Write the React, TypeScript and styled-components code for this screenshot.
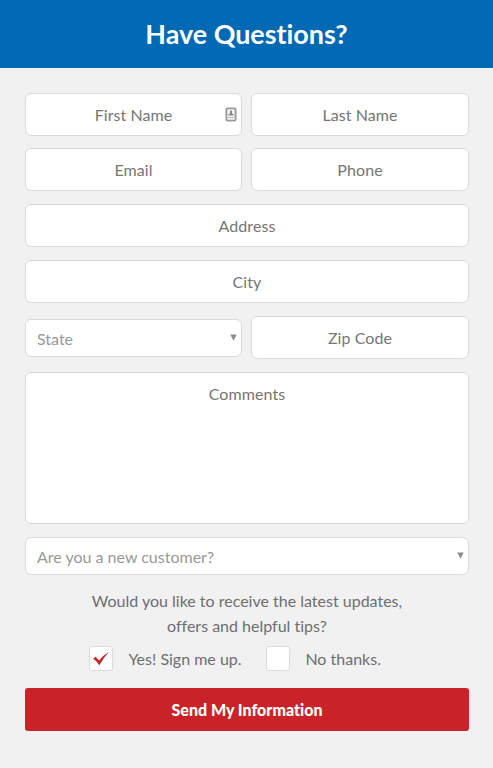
import React, { useState } from "react";
import styled, { createGlobalStyle, css } from "styled-components";

const GlobalStyle = createGlobalStyle`
  *, *::before, *::after { box-sizing: border-box; }
  body {
    margin: 0;
    background: #f1f1f1;
    color: #6d6e71;
    font: 16px/25px Lato, sans-serif;
    font-variant-ligatures: none;
  }
`;

const Page = styled.main`
  min-height: 768px;
  background: #f1f1f1;
`;

const Header = styled.header`
  display: flex;
  align-items: center;
  justify-content: center;
  height: 68px;
  background: #0069b3;
`;

const Title = styled.h1`
  margin: 0;
  color: #fff;
  font-size: 26.9px;
  font-weight: 700;
  line-height: 36px;
`;

const Form = styled.form`
  display: flex;
  flex-direction: column;
  padding: 25px 24px 0 25px;
`;

const Row = styled.div<{ $gap?: number }>`
  display: grid;
  grid-template-columns: 217px 218px;
  column-gap: 9px;
  align-items: start;
  margin-bottom: ${({ $gap = 13 }) => $gap}px;
`;

const box = css`
  display: block;
  width: 100%;
  margin: 0;
  border: 1px solid #dadada;
  border-radius: 6px;
  background: #fff;
  color: #6d6e71;
  font: 16px/25px Lato, sans-serif;
  font-variant-ligatures: none;
  outline: none;
`;

const Input = styled.input<{ $gap?: number }>`
  ${box}
  height: 43px;
  margin-bottom: ${({ $gap = 0 }) => $gap}px;
  padding: 0 10px;
  text-align: center;
  letter-spacing: 0.08px;
  &::placeholder { color: #757575; opacity: 1; }
`;

const TextArea = styled.textarea`
  ${box}
  height: 152px;
  margin-bottom: 13px;
  padding: 8px 10px;
  text-align: center;
  letter-spacing: 0.08px;
  resize: none;
  &::placeholder { color: #757575; opacity: 1; }
`;

const FieldWrap = styled.div`
  position: relative;
`;

const SelectWrap = styled.div<{ $offset?: number }>`
  position: relative;
  margin-top: ${({ $offset = 0 }) => $offset}px;
`;

const SelectBox = styled.select`
  ${box}
  height: 38px;
  padding: 0 24px 0 11px;
  color: #999;
  appearance: none;
`;

const Arrow = styled.svg`
  position: absolute;
  top: 15px;
  right: 5.5px;
  width: 7px;
  height: 7px;
  pointer-events: none;
`;

const AutofillIcon = styled.svg`
  position: absolute;
  top: 14px;
  right: 5px;
  width: 12px;
  height: 15px;
  pointer-events: none;
`;

const Prompt = styled.p`
  width: 340px;
  margin: 13px auto 8px;
  text-align: center;
`;

const Options = styled.div`
  display: flex;
  padding-left: 64px;
`;

const Option = styled.label`
  display: flex;
  align-items: center;
  height: 25px;
  white-space: nowrap;
  &:first-child { width: 177px; }
`;

const OptionText = styled.span`
  height: 25px;
  margin-left: 15.4px;
`;

const HiddenRadio = styled.input`
  position: absolute;
  width: 1px;
  height: 1px;
  opacity: 0;
`;

const CheckBox = styled.span`
  display: flex;
  align-items: center;
  justify-content: center;
  width: 24px;
  height: 25px;
  border: 1px solid #dadada;
  border-radius: 3px;
  background: #fff;
`;

const Submit = styled.button`
  height: 43px;
  margin-top: 17px;
  padding: 0;
  border: 0;
  border-radius: 3px;
  background: #c92329;
  color: #fff;
  font: 900 16px/25px Lato, sans-serif;
  font-variant-ligatures: none;
`;

function Select({ label, choices, offset }: { label: string; choices: string[]; offset?: number }) {
  return (
    <SelectWrap $offset={offset}>
      <SelectBox aria-label={label} defaultValue="">
        <option value="">{label}</option>
        {choices.map((c) => <option key={c}>{c}</option>)}
      </SelectBox>
      <Arrow viewBox="0 0 7 7"><path d="M0.3 0.6h6.4L3.5 6.8z" fill="#8b8b8b" /></Arrow>
    </SelectWrap>
  );
}

function Field({ label, gap }: { label: string; gap?: number }) {
  return <Input aria-label={label} placeholder={label} $gap={gap} />;
}

export default function App() {
  const [signup, setSignup] = useState(0);
  return (
    <Page>
      <GlobalStyle />
      <Header><Title>Have Questions?</Title></Header>
      <Form onSubmit={(e) => e.preventDefault()}>
        <Row $gap={12}>
          <FieldWrap>
            <Field label="First Name" />
            <AutofillIcon viewBox="0 0 12 15">
              <rect x="1.4" y="1.4" width="9.2" height="12.2" rx="1" fill="#f3f3f3" stroke="#9b9b9b" strokeWidth="1.9" />
              <path d="M5 3.4h2v3l1.6.9v1.2H3.4V7.3L5 6.4z" fill="#888" />
              <path d="M3.5 10.5h5" stroke="#b5b5b5" />
            </AutofillIcon>
          </FieldWrap>
          <Field label="Last Name" />
        </Row>
        <Row>
          <Field label="Email" />
          <Field label="Phone" />
        </Row>
        <Field label="Address" gap={13} />
        <Field label="City" gap={13} />
        <Row>
          <Select label="State" choices={["California", "New York", "Texas"]} offset={3} />
          <Field label="Zip Code" />
        </Row>
        <TextArea aria-label="Comments" placeholder="Comments" />
        <Select label="Are you a new customer?" choices={["Yes", "No"]} />
        <Prompt>Would you like to receive the latest updates, offers and helpful tips?</Prompt>
        <Options>
          {["Yes! Sign me up.", "No thanks."].map((text, i) => (
            <Option key={text}>
              <HiddenRadio type="radio" name="signup" checked={signup === i} onChange={() => setSignup(i)} />
              <CheckBox>
                {signup === i && (
                  <svg width="18" height="15" viewBox="0 0 18 15">
                    <path d="M1.2 7.6L3.6 5.8 7 9.4Q11 4.2 17 0.9 11.4 6.6 7.3 14.3 4.8 10.5 1.2 7.6z" fill="#c92329" />
                  </svg>
                )}
              </CheckBox>
              <OptionText>{text}</OptionText>
            </Option>
          ))}
        </Options>
        <Submit>Send My Information</Submit>
      </Form>
    </Page>
  );
}
